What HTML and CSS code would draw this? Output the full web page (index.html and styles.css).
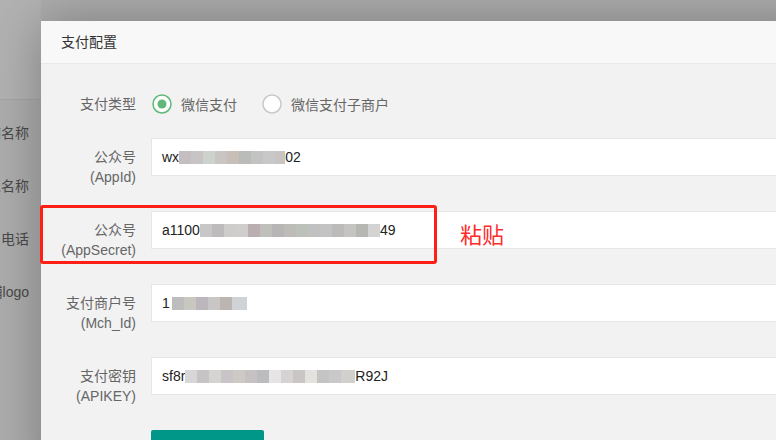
FILE: index.html
```html
<!DOCTYPE html>
<html lang="zh-CN">
<head>
    <meta charset="UTF-8">
    <title>支付配置</title>
    <link rel="stylesheet" href="styles.css">
</head>
<body>

    <div class="bg-page">
        <div class="bg-header"></div>
        <div class="bg-list">
            <div class="bg-label">店铺名称</div>
            <div class="bg-label">联系人名称</div>
            <div class="bg-label">联系电话</div>
            <div class="bg-label">店铺logo</div>
        </div>
    </div>

    <div class="layer">
        <div class="layer-title">支付配置</div>
        <div class="layer-body">
            <div class="form-item">
                <label class="form-label">支付类型</label>
                <div class="radio-group">
                    <span class="radio checked">
                        <svg width="20" height="20" viewBox="0 0 20 20"><circle cx="10" cy="10" r="9" fill="#fff" stroke="#5fb878" stroke-width="1.5"/><circle cx="10" cy="10" r="4.5" fill="#5fb878"/></svg>
                        微信支付
                    </span>
                    <span class="radio">
                        <svg width="20" height="20" viewBox="0 0 20 20"><circle cx="10" cy="10" r="9" fill="#fff" stroke="#c8c8c8" stroke-width="1.5"/></svg>
                        微信支付子商户
                    </span>
                </div>
            </div>

            <div class="form-item">
                <label class="form-label">公众号<br>(AppId)</label>
                <div class="input-block">
                    <div class="input">wx<span class="mosaic blur-appid"></span>02</div>
                </div>
            </div>

            <div class="form-item">
                <label class="form-label">公众号<br>(AppSecret)</label>
                <div class="input-block">
                    <div class="input">a1100<span class="mosaic blur-secret"></span>49</div>
                </div>
            </div>

            <div class="form-item">
                <label class="form-label">支付商户号<br>(Mch_Id)</label>
                <div class="input-block">
                    <div class="input">1<span class="mosaic blur-mch"></span></div>
                </div>
            </div>

            <div class="form-item">
                <label class="form-label">支付密钥<br>(APIKEY)</label>
                <div class="input-block">
                    <div class="input">sf8r<span class="mosaic blur-key"></span>R92J</div>
                </div>
            </div>

            <div class="form-item">
                <div class="input-block offset">
                    <button class="btn">保存</button>
                </div>
            </div>
        </div>
    </div>

    <!-- 标注 -->
    <div class="annot">
        <div class="annot-box"></div>
        <span class="annot-text">粘贴</span>
    </div>

</body>
</html>
```

FILE: styles.css
```css
body {
    margin: 0;
    width: 776px;
    height: 440px;
    overflow: hidden;
    position: relative;
    background: #adadad;
    font-family: 'Liberation Sans', 'Noto Sans CJK SC', sans-serif;
    font-size: 14px;
}
.bg-page {
    width: 41px;
    overflow: hidden;
}
.bg-header {
    height: 99px;
    border-bottom: 1px solid #a5a5a5;
    background: #b2b2b2;
}
.bg-list {
    padding-top: 23px;
}
.bg-label {
    width: 29px;
    height: 53px;
    line-height: 20px;
    display: flex;
    justify-content: flex-end;
    white-space: nowrap;
    color: #4a4a4a;
}
.layer {
    position: absolute;
    left: 41px;
    top: 21px;
    width: 780px;
    height: 470px;
    background: #f2f2f2;
    box-shadow: 1px 1px 50px rgba(0, 0, 0, 0.3);
}
.layer-title {
    height: 42px;
    line-height: 42px;
    padding-left: 20px;
    background: #f8f8f8;
    border-bottom: 1px solid #e8e8e8;
    color: #333;
}
.layer-body {
    padding-top: 21px;
}
.form-item {
    display: flex;
    margin-bottom: 15px;
}
.form-label {
    width: 80px;
    padding: 9px 15px;
    line-height: 20px;
    text-align: right;
    color: #666;
}
.input-block {
    flex: 1;
}
.input-block.offset {
    margin-left: 110px;
}
.input {
    height: 38px;
    box-sizing: border-box;
    border: 1px solid #e6e6e6;
    background: #fff;
    padding-left: 10px;
    display: flex;
    align-items: center;
    color: #222;
}
.radio-group {
    display: flex;
    align-items: center;
    height: 38px;
}
.radio {
    display: flex;
    align-items: center;
    gap: 9px;
    margin-left: 1px;
    margin-right: 24px;
    color: #666;
}
.radio svg {
    display: block;
}
.mosaic {
    display: inline-block;
    height: 13px;
}
.blur-appid {
    width: 106px;
    background: linear-gradient(90deg, #c4bec1 0 12px, #c8c3c4 12px 24px, #cdd2cc 24px 36px, #c9c5c4 36px 48px, #c8bfb9 48px 60px, #b9bcb9 60px 72px, #c3c4c1 72px 84px, #c9c8c9 84px 96px, #c8c4c2 96px);
}
.blur-secret {
    width: 180px;
    background: linear-gradient(90deg, #c9c6c7 0 12px, #bdbbbb 12px 24px, #cfcdcc 24px 36px, #d0cecd 36px 48px, #bbaeb3 48px 60px, #bfc0bc 60px 72px, #b7b5b5 72px 84px, #bebcb9 84px 96px, #bcc1b9 96px 108px, #c0c1c0 108px 120px, #c3c3c3 120px 132px, #bdbaba 132px 144px, #c6c3c3 144px 156px, #b6b6b3 156px 168px, #d3d3d3 168px);
}
.blur-mch {
    width: 75px;
    margin-left: 2px;
    background: linear-gradient(90deg, #bdbdbd 0 12px, #c8c7c0 12px 24px, #bbb7bd 24px 36px, #c9c6c6 36px 48px, #bcb5b1 48px 60px, #cfd3d6 60px);
}
.blur-key {
    width: 170px;
    background: linear-gradient(90deg, #d8d7d7 0 12px, #c6c4c4 12px 24px, #d6d4d2 24px 36px, #c9c4c7 36px 48px, #cdcac6 48px 60px, #c6c2c3 60px 72px, #bcbbbe 72px 84px, #e6e4e4 84px 96px, #d5d3d3 96px 108px, #c9c6c5 108px 120px, #e4e2df 120px 132px, #c4c4c4 132px 144px, #cac8c8 144px 156px, #d2d0cc 156px);
}
.btn {
    display: block;
    width: 113px;
    height: 38px;
    border: none;
    border-radius: 2px;
    background: #009688;
    color: #fff;
    font-size: 14px;
    font-family: inherit;
}
.annot {
    position: absolute;
    left: 40px;
    top: 205px;
    display: flex;
    align-items: center;
    gap: 23px;
}
.annot-box {
    width: 397px;
    height: 59px;
    box-sizing: border-box;
    border: 3px solid #fe2015;
    border-radius: 3px;
}
.annot-text {
    color: #ff2a2a;
    font-size: 22px;
    line-height: 1;
    margin-top: -3px;
    font-family: 'Noto Sans CJK SC', sans-serif;
}
```
